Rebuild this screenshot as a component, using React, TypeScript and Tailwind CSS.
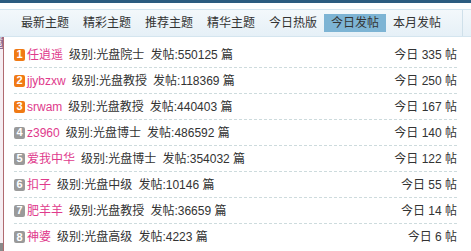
const tabs = ["最新主题", "精彩主题", "推荐主题", "精华主题", "今日热版", "今日发帖", "本月发帖"];

interface RowType {
  name: string;
  level: string;
  posts: number;
  today: number;
}

const rows: RowType[] = [
  { name: "任逍遥", level: "光盘院士", posts: 550125, today: 335 },
  { name: "jjybzxw", level: "光盘教授", posts: 118369, today: 250 },
  { name: "srwam", level: "光盘教授", posts: 440403, today: 167 },
  { name: "z3960", level: "光盘博士", posts: 486592, today: 140 },
  { name: "爱我中华", level: "光盘博士", posts: 354032, today: 122 },
  { name: "扣子", level: "光盘中级", posts: 10146, today: 55 },
  { name: "肥羊羊", level: "光盘教授", posts: 36659, today: 14 },
  { name: "神婆", level: "光盘高级", posts: 4223, today: 6 },
];

export default function App() {
  const active = "今日发帖";

  return (
    <div
      className="w-[471px] h-[251px] overflow-hidden bg-white text-[12px] text-[#333]"
      style={{ fontFamily: '"Liberation Sans", "Noto Sans CJK SC", sans-serif' }}
    >
      <div className="h-[3px] bg-[#2c5c80]"></div>
      <div className="mt-[6px] h-[28px] flex bg-gradient-to-b from-[#f3f8fb] to-[#e6f0f7] border-y border-[#d4e5ef]">
        <div className="w-[463px] flex items-center pl-[14px] border-r border-[#cfe0ea]">
          {tabs.map((tab) => (
            <div
              key={tab}
              className={`h-[18px] px-[7px] flex items-center leading-none ${
                tab === active ? "bg-[#7db4d4]" : ""
              }`}
            >
              {tab}
            </div>
          ))}
        </div>
      </div>
      <div className="flex h-[214px]">
        <div className="w-[4px] flex flex-col border-r border-[#b06a70]">
          <div className="h-[12px] bg-[#8d6b95] overflow-hidden text-white leading-[12px] -indent-[9px]">
            遣
          </div>
          <div className="flex-1 bg-[#f6eef2]"></div>
          <div className="h-[8px] bg-[#8a8a8a]"></div>
        </div>
        <div className="w-[453px] pl-[10px] pt-[5px]">
          {rows.map((row, index) => (
            <div
              key={row.name}
              className="h-[26px] flex items-center border-b border-dashed border-[#cddbdd] last:border-b-0"
            >
              <span
                className={`w-[11px] h-[12px] rounded-[2px] flex items-center justify-center text-white font-bold text-[11px] leading-none ${
                  index < 3 ? "bg-[#f07a14]" : "bg-[#9a9a9a]"
                }`}
              >
                {index + 1}
              </span>
              <span className="ml-[2px] text-[#e03a8c]">{row.name}</span>
              <span className="ml-[6px]">级别:{row.level}</span>
              <span className="ml-[6px]">发帖:{row.posts} 篇</span>
              <span className="ml-auto">今日 {row.today} 帖</span>
            </div>
          ))}
        </div>
      </div>
    </div>
  );
}
